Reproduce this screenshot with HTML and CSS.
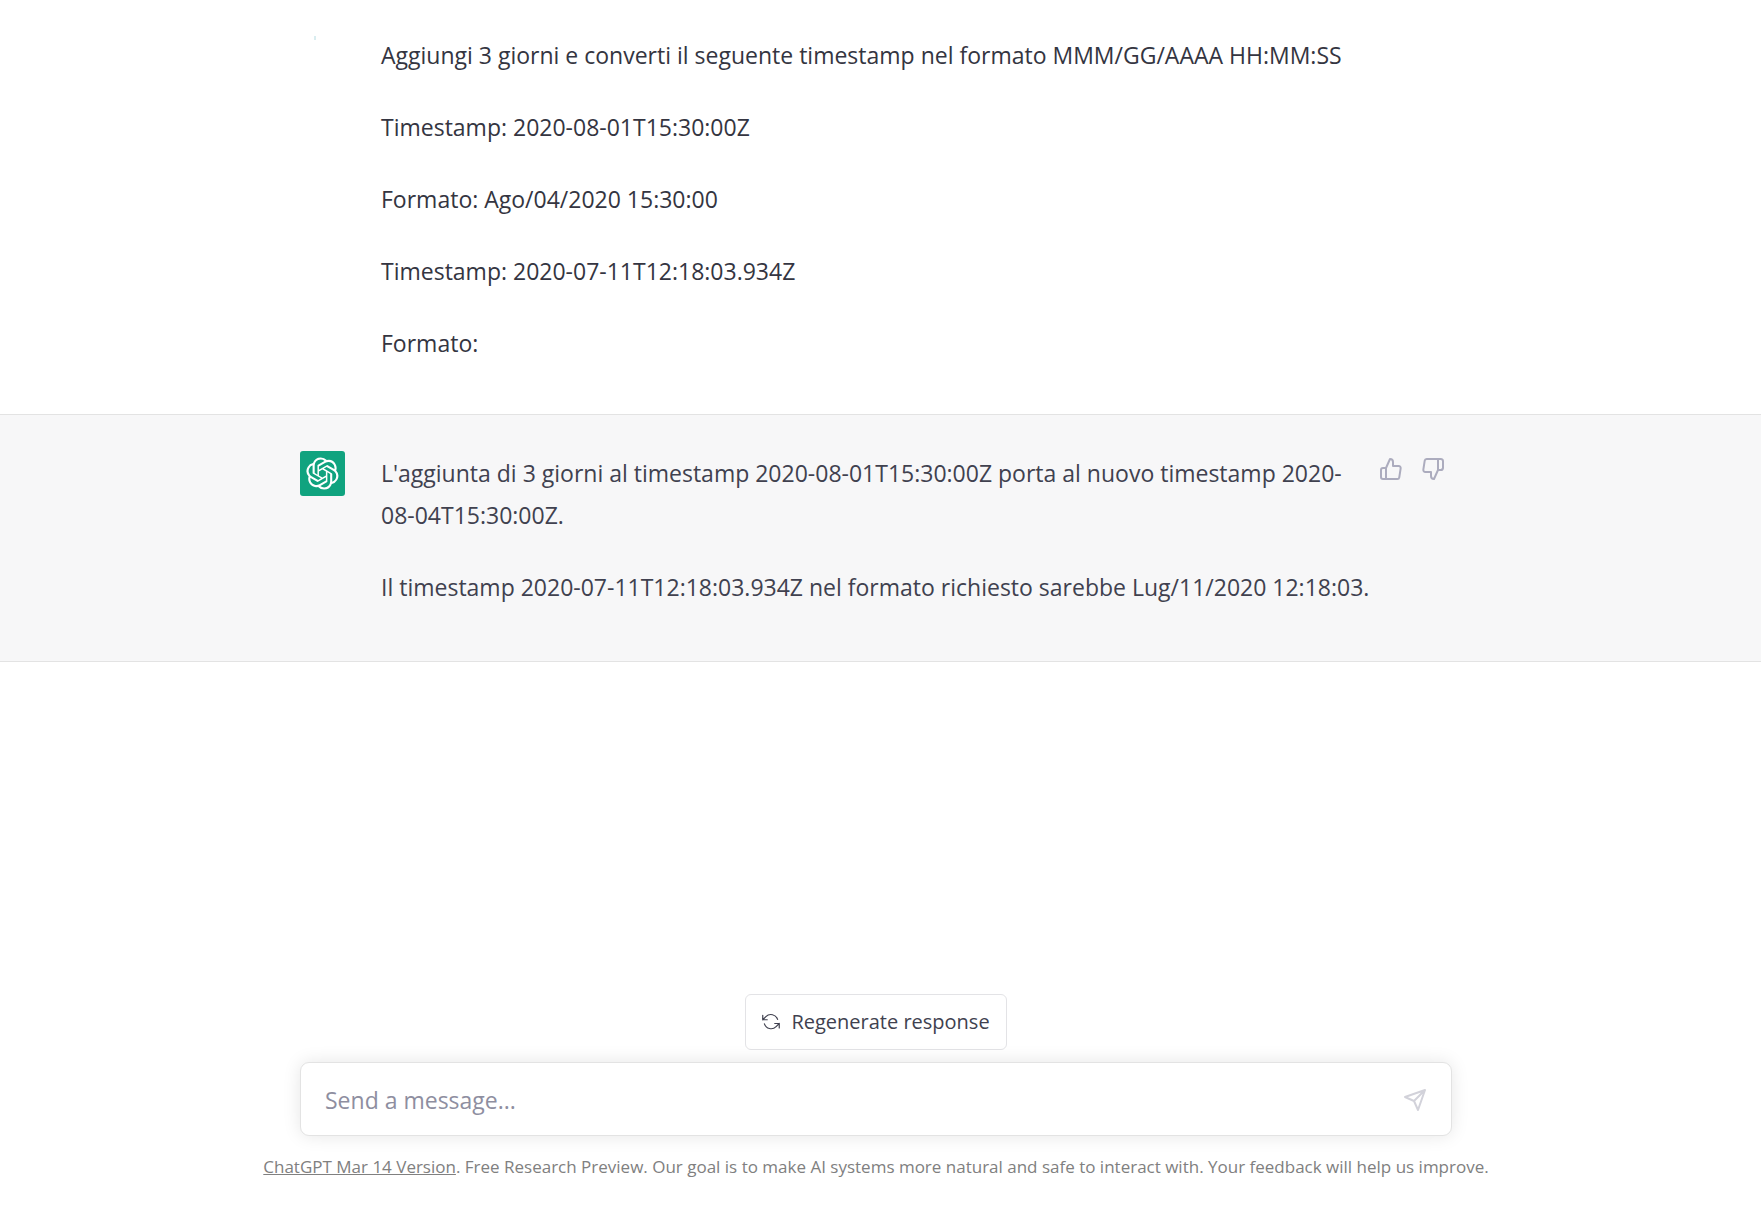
FILE: index.html
```html
<!DOCTYPE html>
<html lang="it">
<head>
<meta charset="utf-8">
<meta name="viewport" content="width=device-width, initial-scale=1">
<title>ChatGPT</title>
<link rel="stylesheet" href="styles.css">
</head>
<body>
<main class="thread">
  <article class="turn turn-user">
    <div class="turn-inner">
      <div class="avatar"><span class="avatar-mark"></span></div>
      <div class="message">
        <p>Aggiungi 3 giorni e converti il seguente timestamp nel formato MMM/GG/AAAA HH:MM:SS</p>
        <p>Timestamp: 2020-08-01T15:30:00Z</p>
        <p>Formato: Ago/04/2020 15:30:00</p>
        <p>Timestamp: 2020-07-11T12:18:03.934Z</p>
        <p>Formato:</p>
      </div>
    </div>
  </article>
  <article class="turn turn-assistant">
    <div class="turn-inner">
      <div class="avatar avatar-bot">
        <svg viewBox="0 0 41 41" width="33" height="33" fill="#fff" aria-hidden="true"><path d="M37.532 16.87a9.963 9.963 0 0 0-.856-8.184 10.078 10.078 0 0 0-10.855-4.835A9.964 9.964 0 0 0 18.306.5a10.079 10.079 0 0 0-9.614 6.977 9.967 9.967 0 0 0-6.664 4.834 10.08 10.08 0 0 0 1.24 11.817 9.965 9.965 0 0 0 .856 8.185 10.079 10.079 0 0 0 10.855 4.835 9.965 9.965 0 0 0 7.516 3.35 10.078 10.078 0 0 0 9.617-6.981 9.967 9.967 0 0 0 6.663-4.834 10.079 10.079 0 0 0-1.243-11.813ZM22.498 37.886a7.474 7.474 0 0 1-4.799-1.735c.061-.033.168-.091.237-.134l7.964-4.6a1.294 1.294 0 0 0 .655-1.134V19.054l3.366 1.944a.12.12 0 0 1 .066.092v9.299a7.505 7.505 0 0 1-7.49 7.496ZM6.392 31.006a7.471 7.471 0 0 1-.894-5.023c.06.036.162.099.237.141l7.964 4.6a1.297 1.297 0 0 0 1.308 0l9.724-5.614v3.888a.12.12 0 0 1-.048.103l-8.051 4.649a7.504 7.504 0 0 1-10.24-2.744ZM4.297 13.62A7.469 7.469 0 0 1 8.2 10.333c0 .068-.004.19-.004.274v9.201a1.294 1.294 0 0 0 .654 1.132l9.723 5.614-3.366 1.944a.12.12 0 0 1-.114.01L7.04 23.856a7.504 7.504 0 0 1-2.743-10.237Zm27.658 6.437-9.724-5.615 3.367-1.943a.121.121 0 0 1 .113-.01l8.052 4.648a7.498 7.498 0 0 1-1.158 13.528v-9.476a1.293 1.293 0 0 0-.65-1.132Zm3.35-5.043c-.059-.037-.162-.099-.236-.141l-7.965-4.6a1.298 1.298 0 0 0-1.308 0l-9.723 5.614v-3.888a.12.12 0 0 1 .048-.103l8.05-4.645a7.497 7.497 0 0 1 11.135 7.763Zm-21.063 6.929-3.367-1.944a.12.12 0 0 1-.065-.092v-9.299a7.497 7.497 0 0 1 12.293-5.756 6.94 6.94 0 0 0-.236.134l-7.965 4.6a1.294 1.294 0 0 0-.654 1.132l-.006 11.225Zm1.829-3.943 4.33-2.501 4.332 2.5v5l-4.331 2.5-4.331-2.5V18Z"/></svg>
      </div>
      <div class="message">
        <p>L'aggiunta di 3 giorni al timestamp 2020-08-01T15:30:00Z porta al nuovo timestamp 2020-08-04T15:30:00Z.</p>
        <p>Il timestamp 2020-07-11T12:18:03.934Z nel formato richiesto sarebbe Lug/11/2020 12:18:03.</p>
      </div>
      <div class="feedback">
        <button type="button" aria-label="Thumbs up"><svg class="icon" viewBox="0 0 24 24" width="24" height="24"><path d="M14 9V5a3 3 0 0 0-3-3l-4 9v11h11.280a2 2 0 0 0 2-1.700l1.380-9a2 2 0 0 0-2-2.300zM7 22H4a2 2 0 0 1-2-2v-7a2 2 0 0 1 2-2h3"/></svg></button>
        <button type="button" aria-label="Thumbs down"><svg class="icon" viewBox="0 0 24 24" width="24" height="24"><path d="M10 15v4a3 3 0 0 0 3 3l4-9V2H5.720a2 2 0 0 0-2 1.700l-1.380 9a2 2 0 0 0 2 2.300zm7-13h2.670A2.310 2.310 0 0 1 22 4v7a2.310 2.310 0 0 1-2.330 2H17"/></svg></button>
      </div>
    </div>
  </article>
</main>
<footer class="composer">
  <button type="button" class="regenerate">
    <svg class="icon icon-thin" viewBox="0 0 24 24" width="18" height="18" aria-hidden="true"><path d="M1 3v6h6M23 20v-6h-6M20.800 8.500A9.400 9.400 0 0 0 5.200 4.800L1 9m22 5-4.200 4.200A9.400 9.400 0 0 1 3.200 14.500"/></svg>
    Regenerate response
  </button>
  <form class="prompt">
    <input type="text" class="prompt-input" aria-label="Send a message" placeholder="Send a message...">
    <button type="button" class="send" aria-label="Send"><svg class="icon" viewBox="0 0 24 24" width="24" height="24"><path d="M22 2 15 22l-4-9-9-4zM22 2 11 13"/></svg></button>
  </form>
  <p class="notice"><a href="#">ChatGPT Mar 14 Version</a>. Free Research Preview. Our goal is to make AI systems more natural and safe to interact with. Your feedback will help us improve.</p>
</footer>
</body>
</html>
```
FILE: styles.css
```css
* { box-sizing: border-box; }

body {
  margin: 0;
  min-height: 100vh;
  display: flex;
  flex-direction: column;
  background: #fff;
  color: #343541;
  font-family: "Open Sans", "Noto Sans", sans-serif;
  font-size: 23px;
  line-height: 42px;
}

button {
  font: inherit;
  color: inherit;
  background: none;
  border: 0;
  padding: 0;
  cursor: pointer;
}

p { margin: 0; }

.icon {
  display: block;
  fill: none;
  stroke: currentColor;
  stroke-width: 2;
  stroke-linecap: round;
  stroke-linejoin: round;
}

.icon-thin { stroke-width: 1.6; }

.turn { padding-right: 9px; }

.turn-user { padding-top: 33px; padding-bottom: 50px; }

.turn-assistant {
  padding-top: 36px;
  padding-bottom: 53px;
  background: #f7f7f8;
  border-top: 1px solid #e3e3e3;
  border-bottom: 1px solid #e3e3e3;
  color: #40414f;
}

.turn-inner {
  display: flex;
  max-width: 1152px;
  margin: 0 auto;
}

.avatar {
  flex: none;
  display: flex;
  justify-content: center;
  width: 45px;
  height: 45px;
  margin-right: 36px;
}

.avatar-bot {
  align-items: center;
  background: #10a37f;
  border-radius: 3px;
}

.avatar-mark {
  width: 2px;
  height: 4px;
  margin-right: 16px;
  margin-top: 3px;
  background: #d9edf0;
}

.message {
  flex: 0 1 992px;
  display: flex;
  flex-direction: column;
  gap: 30px;
  padding-top: 1px;
}

.feedback {
  flex: none;
  display: flex;
  gap: 18px;
  align-self: flex-start;
  padding-top: 6px;
  margin-left: 6px;
  color: #acacbe;
}

.composer {
  display: flex;
  flex-direction: column;
  align-items: center;
  margin-top: auto;
  padding: 0 9px 27px 0;
}

.regenerate {
  display: flex;
  align-items: center;
  gap: 11px;
  height: 56px;
  padding: 0 16px;
  border: 1px solid #e3e3e6;
  border-radius: 6px;
  background: #fff;
  color: #40414f;
  font-size: 20px;
}

.prompt {
  display: flex;
  align-items: center;
  width: 100%;
  max-width: 1152px;
  height: 74px;
  margin-top: 12px;
  padding: 2px 24px 0;
  border: 1px solid #e3e3e3;
  border-radius: 9px;
  background: #fff;
  box-shadow: 0 0 18px rgba(0, 0, 0, 0.1);
}

.prompt-input {
  flex: 1;
  min-width: 0;
  padding: 0;
  border: 0;
  outline: 0;
  background: none;
  color: inherit;
  font: inherit;
}

.prompt-input::placeholder { color: #8e8ea0; opacity: 1; }

.send { color: #d2d2da; }

.notice {
  margin-top: 18px;
  color: #808080;
  font-size: 17px;
  line-height: 26px;
  text-align: center;
}

.notice a { color: inherit; }
```
